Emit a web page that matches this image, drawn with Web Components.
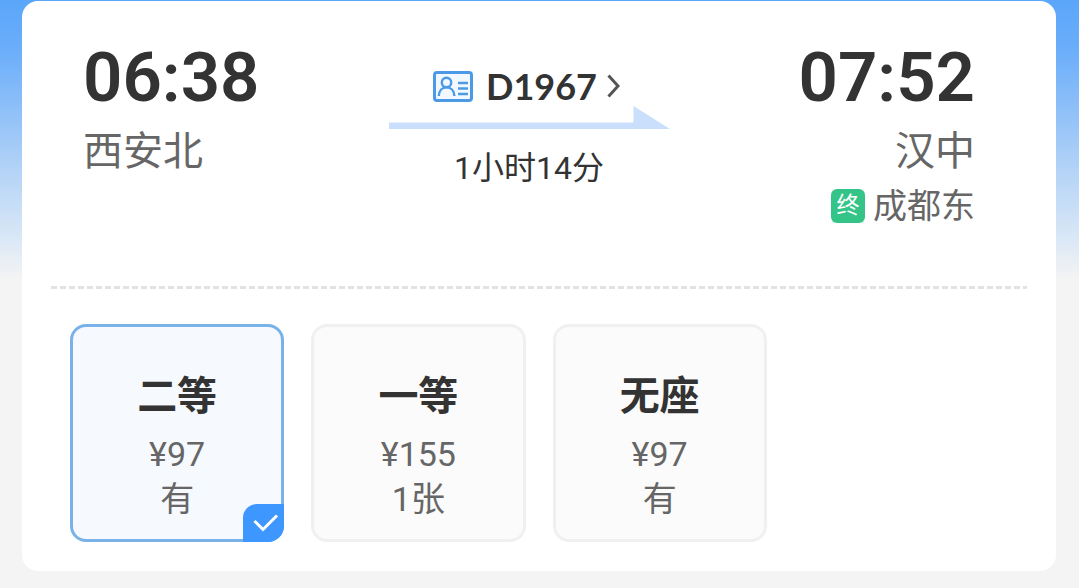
<!DOCTYPE html>
<html lang="zh-CN">
<head>
<meta charset="utf-8">
<meta name="viewport" content="width=device-width, initial-scale=1">
<title>D1967 西安北 - 汉中</title>
<style>
  html { min-height: 100%; background: #f4f4f4; }
  body {
    margin: 0;
    padding: 1px 23px 17px 22px;
    background: linear-gradient(#5ba6fa 0, #6baefa 50px, #8fc0f8 110px, #b9d6f7 180px, #dbe8f6 240px, #f4f4f4 280px) no-repeat 0 0 / 100% 280px;
    font-family: Roboto, "Noto Sans CJK SC", sans-serif;
    color: #333;
  }
</style>
</head>
<body>
<ticket-card>
  <trip-summary slot="trip">
    <trip-stop slot="from" time="06:38" station="西安北"></trip-stop>
    <train-link slot="train" code="D1967" duration="1小时14分"></train-link>
    <trip-stop slot="to" align="end" time="07:52" station="汉中" terminal="成都东"></trip-stop>
  </trip-summary>
  <seat-picker slot="seats">
    <seat-option name="二等" price="¥97" stock="有" checked></seat-option>
    <seat-option name="一等" price="¥155" stock="1张"></seat-option>
    <seat-option name="无座" price="¥97" stock="有"></seat-option>
  </seat-picker>
</ticket-card>

<script>
class BaseElement extends HTMLElement {
  render(html) {
    this.attachShadow({ mode: 'open' }).innerHTML = html;
  }
}

customElements.define('ticket-card', class extends BaseElement {
  connectedCallback() {
    this.render(`
      <style>
        :host { display: block; background: #fff; border-radius: 16px; padding: 37px 0 29px; }
        .divider {
          height: 3px; margin: 0 29px 35px; border: 0;
          background: repeating-linear-gradient(90deg, #e2e2e2 0 6px, transparent 6px 9px);
        }
      </style>
      <slot name="trip"></slot>
      <hr class="divider">
      <slot name="seats"></slot>`);
  }
});

customElements.define('trip-summary', class extends BaseElement {
  connectedCallback() {
    this.render(`
      <style>
        :host { display: grid; grid-template-columns: 1fr auto 1fr; padding: 0 81px 56px 61px; }
      </style>
      <slot name="from"></slot><slot name="train"></slot><slot name="to"></slot>`);
  }
});

customElements.define('trip-stop', class extends BaseElement {
  connectedCallback() {
    const { time, station, terminal } = Object.fromEntries([...this.attributes].map(a => [a.name, a.value]));
    this.render(`
      <style>
        :host { display: flex; flex-direction: column; align-items: flex-start; }
        :host([align="end"]) { align-items: flex-end; }
        time { font-size: 69px; line-height: 80px; font-weight: 600; color: #333; }
        .station { margin-top: 2px; font: 400 40px/56px "Noto Sans CJK SC", sans-serif; color: #666; }
        .terminal { display: flex; align-items: center; gap: 8px; margin-top: 6px;
          font: 400 34px/48px Roboto, "Noto Sans CJK SC", sans-serif; color: #666; }
        .badge { width: 34px; border-radius: 6px; background: #34c488; color: #fff;
          font-size: 23px; line-height: 34px; text-align: center; }
      </style>
      <time datetime="${time}">${time}</time>
      <span class="station">${station}</span>
      ${terminal ? `<span class="terminal"><span class="badge">终</span>${terminal}</span>` : ''}`);
  }
});

customElements.define('train-link', class extends BaseElement {
  connectedCallback() {
    this.render(`
      <style>
        :host { display: flex; flex-direction: column; align-items: center; padding-top: 28px; }
        a { display: flex; align-items: center; color: #333; text-decoration: none;
          padding-right: 4px; font: 700 36px/40px Lato, sans-serif; }
        .card { margin-right: 13px; }
        .chevron { margin-left: 10px; }
        svg { display: block; }
        .duration { margin-top: 15px; font: 400 32px/48px Roboto, "Noto Sans CJK SC", sans-serif; }
      </style>
      <a href="#train">
        <svg class="card" width="40" height="31" viewBox="0 0 40 31" fill="none" stroke="#4c99e6" stroke-width="2.4" aria-hidden="true">
          <rect x="1.5" y="1.5" width="37" height="28" rx="2.5" fill="#f1f8ff" stroke-width="3"/>
          <circle cx="13.500" cy="11.500" r="4.700"/>
          <path d="M5.800 25c.3-5 3-8.600 7.700-8.600s7.600 3.600 7.900 8.600M25 12h10M25 17.500h10M25 23h10"/>
        </svg>
        <span>${this.getAttribute('code')}</span>
        <svg class="chevron" width="14" height="24" viewBox="0 0 14 24" fill="none" stroke="#555" stroke-width="3" aria-hidden="true">
          <path d="M1.500 1.500l9.500 10.500l-9.500 10.500"/>
        </svg>
      </a>
      <svg width="281" height="23" viewBox="0 0 281 23" aria-hidden="true">
        <path d="M0 16.500H244.500V0L281 23H0z" fill="#c9dffc"/>
      </svg>
      <span class="duration">${this.getAttribute('duration')}</span>`);
  }
});

customElements.define('seat-picker', class extends BaseElement {
  connectedCallback() {
    this.render(`
      <style>
        :host { display: grid; grid-template-columns: repeat(4, 1fr); gap: 27px; padding: 0 48px; }
      </style>
      <slot></slot>`);
    this.setAttribute('role', 'radiogroup');
    this.setAttribute('aria-label', '席别');
    this.addEventListener('seat-select', e => {
      for (const option of this.children) option.selected = option === e.target;
    });
  }
});

customElements.define('seat-option', class extends BaseElement {
  connectedCallback() {
    this.render(`
      <style>
        :host { display: block; }
        label {
          position: relative; display: flex; flex-direction: column; align-items: center;
          padding: 40px 0 17px; border: 3px solid #f0f0f0; border-radius: 16px;
          background: #fbfbfb; cursor: pointer; color: #666;
          font: 400 34px/45px Roboto, "Noto Sans CJK SC", sans-serif;
        }
        label:has(:checked) { border-color: #79b2e9; background: #f6f9fe; }
        input { position: absolute; inset: 0; margin: 0; opacity: 0; }
        .name { font-size: 40px; font-weight: 700; line-height: 60px; color: #333; margin-bottom: 5px; }
        .tick { display: none; position: absolute; right: -3px; bottom: -3px; background: #3d97ff; }
        input:checked ~ .tick { display: block; border-radius: 14px 0 16px 0; }
      </style>
      <label>
        <input type="radio" name="seat" value="${this.getAttribute('name')}" ${this.hasAttribute('checked') ? 'checked' : ''}>
        <span class="name">${this.getAttribute('name')}</span>
        <span>${this.getAttribute('price')}</span>
        <span>${this.getAttribute('stock')}</span>
        <svg class="tick" width="41" height="38" viewBox="0 0 41 38" fill="none" stroke="#fff" stroke-width="3" aria-hidden="true">
          <path d="M11.500 17l8.500 8.500L34 11.500"/>
        </svg>
      </label>`);
    this.input = this.shadowRoot.querySelector('input');
    this.input.addEventListener('change', () => {
      this.dispatchEvent(new CustomEvent('seat-select', { bubbles: true }));
    });
  }
  set selected(value) { this.input.checked = value; }
});
</script>
</body>
</html>
